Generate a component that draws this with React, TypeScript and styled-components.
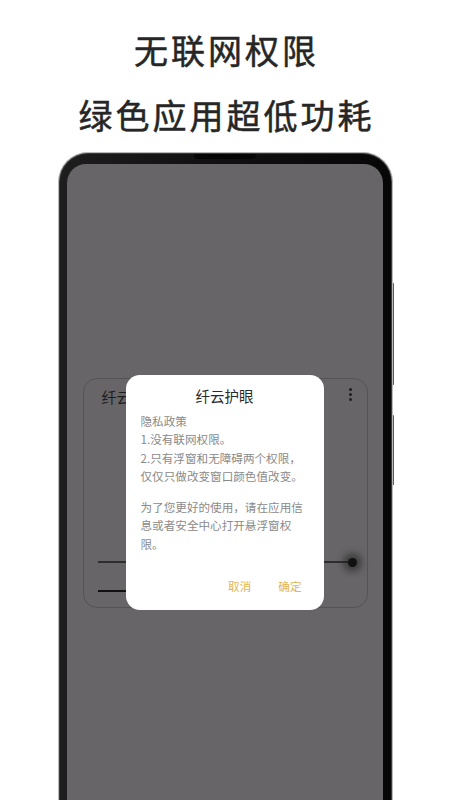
import React from "react";
import styled, { createGlobalStyle } from "styled-components";

const Global = createGlobalStyle`
  html, body { margin: 0; padding: 0; background: #ffffff; }
  body { font-family: "Noto Sans CJK SC", "Noto Sans", sans-serif; }
  #root { width: 450px; height: 800px; }
`;

const Page = styled.div`
  width: 450px;
  height: 800px;
  overflow: hidden;
  display: flex;
  flex-direction: column;
  align-items: center;
  background: #ffffff;
`;

const Headline = styled.header`
  padding-top: 17px;
  display: flex;
  flex-direction: column;
  align-items: center;
`;

const HeadLine = styled.h1`
  margin: 0;
  font-size: 34px;
  line-height: 65px;
  font-weight: 400;
  -webkit-text-stroke: 0.5px #262626;
  letter-spacing: 3px;
  text-indent: 3px;
  color: #262626;
`;

const Frame = styled.div`
  position: relative;
  margin-top: 5px;
  width: 335px;
  flex: 1;
  box-sizing: border-box;
  border-radius: 30px 30px 0 0;
  border: 1.5px solid #b9b9b9;
  border-bottom: none;
  background: #3a3a3a;
  padding: 1px 1px 0 1px;
  display: flex;
`;

const SideButton = styled.span<{ $top: number; $h: number }>`
  position: absolute;
  right: -2.5px;
  top: ${(p) => p.$top}px;
  width: 1.5px;
  height: ${(p) => p.$h}px;
  background: #5a5a5a;
  border-radius: 1px;
`;

const Bezel = styled.div`
  position: relative;
  flex: 1;
  border-radius: 28px 28px 0 0;
  background: linear-gradient(90deg, #1e1e1e 0%, #121212 40%, #070707 100%);
  padding: 10px 8px 0 7px;
  display: flex;
`;

const Speaker = styled.span`
  position: absolute;
  top: 0;
  left: 50%;
  transform: translateX(-50%);
  width: 62px;
  height: 5px;
  border-radius: 0 0 4px 4px;
  background: #050505;
`;

const Screen = styled.div`
  position: relative;
  flex: 1;
  border-radius: 19px 19px 0 0;
  background: #676567;
  padding: 214px 15px 0 16px;
  box-sizing: border-box;
`;

const Card = styled.section`
  height: 230px;
  box-sizing: border-box;
  border: 1px solid #555355;
  border-radius: 14px;
  padding: 8px 14px 0 14px;
  display: flex;
  flex-direction: column;
`;

const CardHead = styled.div`
  height: 20px;
  display: flex;
  align-items: center;
  justify-content: space-between;
  padding-left: 4px;
`;

const CardTitle = styled.span`
  font-size: 15px;
  line-height: 20px;
  color: #1e1e1e;
`;

const Kebab = styled.span`
  display: flex;
  flex-direction: column;
  gap: 2px;
  margin-right: 1px;
  margin-top: -6px;
`;

const Dot = styled.i`
  width: 3px;
  height: 3px;
  border-radius: 50%;
  background: #1e1e1e;
`;

const SliderRow = styled.div<{ $mt: number }>`
  margin-top: ${(p) => p.$mt}px;
  height: 20px;
  display: flex;
  align-items: center;
`;

const Track = styled.div<{ $dark?: boolean; $w?: string }>`
  width: ${(p) => p.$w ?? "auto"};
  flex: ${(p) => (p.$w ? "none" : "1")};
  height: ${(p) => (p.$dark ? 2 : 1.5)}px;
  background: ${(p) => (p.$dark ? "#111111" : "#2e2e2e")};
`;

const Knob = styled.span`
  width: 9px;
  height: 9px;
  margin-left: -5px;
  margin-right: -4px;
  border-radius: 50%;
  background: #111111;
  box-shadow: 0 0 6px 5px rgba(25, 25, 25, 0.5);
`;

const Dialog = styled.div`
  position: absolute;
  top: 211px;
  left: 50%;
  transform: translateX(-50%);
  width: 198px;
  height: 235px;
  box-sizing: border-box;
  background: #ffffff;
  border-radius: 14px;
  padding: 11px 0 0 15px;
  display: flex;
  flex-direction: column;
`;

const DialogTitle = styled.h2`
  margin: 0 0 0 -15px;
  text-align: center;
  font-size: 14.5px;
  line-height: 20px;
  font-weight: 400;
  color: #2a2a2a;
`;

const Body = styled.div`
  margin-top: 6px;
  font-size: 11.6px;
  line-height: 18.3px;
  color: #8a8a8a;
`;

const Para = styled.p<{ $mt?: number }>`
  margin: ${(p) => p.$mt ?? 0}px 0 0 0;
`;

const Line = styled.span`
  display: block;
  white-space: nowrap;
`;

const Actions = styled.div`
  margin-top: auto;
  margin-bottom: 15px;
  padding-right: 22px;
  display: flex;
  justify-content: flex-end;
  gap: 27px;
`;

const ActionButton = styled.button`
  border: none;
  background: none;
  padding: 0;
  font-family: inherit;
  font-size: 11.6px;
  line-height: 18px;
  color: #e2b650;
`;

export default function App() {
  return (
    <>
      <Global />
      <Page>
        <Headline>
          <HeadLine>无联网权限</HeadLine>
          <HeadLine>绿色应用超低功耗</HeadLine>
        </Headline>
        <Frame>
          <SideButton $top={130} $h={102} />
          <SideButton $top={262} $h={70} />
          <Bezel>
            <Speaker />
            <Screen>
              <Card>
                <CardHead>
                  <CardTitle>纤云</CardTitle>
                  <Kebab>
                    <Dot />
                    <Dot />
                    <Dot />
                  </Kebab>
                </CardHead>
                <SliderRow $mt={145}>
                  <Track />
                  <Knob />
                </SliderRow>
                <SliderRow $mt={9}>
                  <Track $dark $w="120px" />
                </SliderRow>
              </Card>
              <Dialog>
                <DialogTitle>纤云护眼</DialogTitle>
                <Body>
                  <Para>
                    <Line>隐私政策</Line>
                    <Line>1.没有联网权限。</Line>
                    <Line>2.只有浮窗和无障碍两个权限，</Line>
                    <Line>仅仅只做改变窗口颜色值改变。</Line>
                  </Para>
                  <Para $mt={13}>
                    <Line>为了您更好的使用，请在应用信</Line>
                    <Line>息或者安全中心打开悬浮窗权</Line>
                    <Line>限。</Line>
                  </Para>
                </Body>
                <Actions>
                  <ActionButton>取消</ActionButton>
                  <ActionButton>确定</ActionButton>
                </Actions>
              </Dialog>
            </Screen>
          </Bezel>
        </Frame>
      </Page>
    </>
  );
}
